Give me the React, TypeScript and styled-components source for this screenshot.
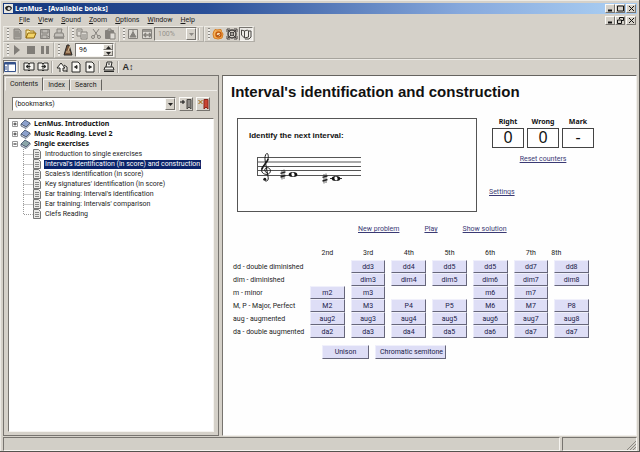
import React from "react";
import styled, { createGlobalStyle, css } from "styled-components";

const GlobalStyle = createGlobalStyle`
  * { box-sizing: border-box; }
  body { margin: 0; background: #d5d1c9; }
  body, button, input, select { font-family: Roboto, "Noto Sans", sans-serif; font-size: 7px; line-height: 10px; color: #1c1c1c; }
  button, input, select { margin: 0; padding: 0; border-radius: 0; }
`;

const boldFace = css`
  font-family: "Noto Sans", "Open Sans", sans-serif;
  font-weight: 700;
`;
const raised = css`
  border: 1px solid;
  border-color: #fbfaf7 #77746f #77746f #fbfaf7;
`;
const sunken = css`
  border: 1px solid;
  border-color: #77746f #f6f4f0 #f6f4f0 #77746f;
`;

const Window = styled.div`
  display: flex;
  flex-direction: column;
  min-height: 100vh;
  padding: 3px 2px 0 3px;
  background: #d5d1c9;
  border-right: 1px solid #55534f;
  border-bottom: 1px solid #55534f;
  box-shadow: inset 1px 1px #eceae5;
`;
const TitleBar = styled.header`
  display: flex;
  align-items: center;
  gap: 2px;
  height: 11px;
  padding: 0 1px;
  background: linear-gradient(90deg, #16387c, #2a4f98 32%, #86a8dc 72%, #a6caf0 95%);
`;
const Title = styled.h1`
  flex: 1;
  margin: 0;
  font-size: 7px;
  line-height: 10px;
  color: #fff;
  ${boldFace}
`;
const WindowButtons = styled.div`
  display: flex;
  button:last-child { margin-left: 1px; }
`;
const CaptionButton = styled.button`
  display: grid;
  place-items: center;
  width: 10px;
  height: 9px;
  background: #d5d1c9;
  ${raised}
`;
const MenuBar = styled.nav`
  display: flex;
  align-items: center;
  height: 12px;
  padding: 0 1px 0 12px;
`;
const MenuList = styled.div`
  display: flex;
  flex: 1;
`;
const MenuItem = styled.button`
  padding: 0 4px;
  border: 0;
  background: none;
  &::first-letter { text-decoration: underline; }
`;
const BarRow = styled.div`
  display: flex;
  height: 16px;
`;
const ToolBar = styled.div`
  display: flex;
  align-items: center;
  height: 16px;
  padding: 0 1px;
  border: 1px solid;
  border-color: #eceae4 #b1aea7 #b1aea7 #eceae4;
`;
const Grip = styled.span`
  width: 2px;
  height: 12px;
  margin: 0 1px 0 2px;
  background: repeating-linear-gradient(#8b8984 0 1px, #efede9 1px 3px);
`;
const Separator = styled.span`
  width: 2px;
  height: 12px;
  margin: 0 2px 0 1px;
  border-left: 1px solid #aaa7a1;
  border-right: 1px solid #f1efeb;
`;
const ToolButton = styled.button<{ $pressed?: boolean; $dim?: boolean }>`
  display: grid;
  place-items: center;
  width: 14px;
  height: 14px;
  background: ${(p) => (p.$pressed ? "#ebe9e5" : "none")};
  color: ${(p) => (p.$dim ? "#85827d" : "#2a2a28")};
  border: 0;
  ${(p) => p.$pressed && sunken}
`;
const Field = styled.div<{ $grow?: boolean; $width?: number; $off?: boolean }>`
  display: flex;
  flex: ${(p) => (p.$grow ? "1" : "none")};
  width: ${(p) => (p.$width ? p.$width + "px" : "auto")};
  height: 14px;
  background: ${(p) => (p.$off ? "#d5d1c9" : "#fff")};
  position: relative;
  ${sunken}
`;
const Select = styled.select`
  flex: 1;
  min-width: 0;
  padding: 0 2px;
  border: 0;
  appearance: none;
  background: transparent;
  line-height: 12px;
  &:disabled { color: #96938d; opacity: 1; padding-left: 3px; }
`;
const DropArrow = styled.span`
  display: grid;
  place-items: center;
  position: absolute;
  right: 0;
  top: 0;
  width: 10px;
  height: 12px;
  background: #d5d1c9;
  pointer-events: none;
  ${raised}
`;
const TempoInput = styled.input`
  flex: 1;
  min-width: 0;
  padding: 0 3px;
  border: 0;
  background: none;
`;
const SpinColumn = styled.div`
  display: grid;
  width: 10px;
  grid-template-rows: 6px 6px;
`;
const SpinButton = styled.button`
  display: grid;
  place-items: center;
  background: #d5d1c9;
  ${raised}
`;
const NavBar = styled.div`
  display: flex;
  align-items: center;
  height: 17px;
  border-top: 1px solid #a7a49d;
  box-shadow: inset 0 1px #ebe9e4;
`;
const FontSizeLabel = styled.b`
  font: 700 9px/12px "Liberation Sans", "DejaVu Sans", sans-serif;
`;
const Main = styled.main`
  display: flex;
  flex: 1;
  gap: 3px;
`;
const SidePane = styled.aside`
  display: flex;
  flex-direction: column;
  flex: 0 0 34%;
  min-width: 216px;
  padding: 1px 4px 3px;
  background: #d5d1c9;
  border: 1px solid #77746f;
`;
const TabRow = styled.div`
  display: flex;
  align-items: flex-end;
  height: 14px;
  margin: 0 -3px;
  box-shadow: inset 0 -1px #eeece8;
`;
const Tab = styled.button<{ $active?: boolean }>`
  height: ${(p) => (p.$active ? "14px" : "12px")};
  padding: 0 4px;
  background: #d5d1c9;
  border: 1px solid;
  border-color: #f1efeb #65635f transparent #f1efeb;
  border-bottom-color: ${(p) => (p.$active ? "#d5d1c9" : "#eeece8")};
`;
const BookmarkRow = styled.div`
  display: flex;
  gap: 3px;
  padding: 6px 4px 7px 4px;
`;
const BookmarkButton = styled.button`
  display: grid;
  place-items: center;
  width: 14px;
  height: 14px;
  background: #d5d1c9;
  ${raised}
`;
const Tree = styled.ul`
  flex: 1;
  margin: 0;
  padding: 0 3px;
  list-style: none;
  background: #fff;
  ${sunken}
`;
const SubTree = styled.ul`
  margin: 0 0 0 10px;
  padding: 0;
  list-style: none;
`;
const BookRow = styled.button`
  display: flex;
  align-items: center;
  gap: 3px;
  height: 10px;
  border: 0;
  background: none;
  color: #111;
  ${boldFace}
`;
const PageRow = styled.button`
  display: flex;
  align-items: center;
  height: 10px;
  border: 0;
  background: none;
  white-space: nowrap;
`;
const PageLabel = styled.span<{ $selected?: boolean }>`
  margin-left: 2px;
  padding: 0 1px;
  line-height: 9px;
  ${(p) => p.$selected && "background:#0a246a;color:#fff;"}
`;
const Page = styled.article`
  flex: 1;
  padding: 6px 8px;
  background: #fefefe;
  border: 1px solid;
  border-color: #65635f #f1efeb #f1efeb #77746f;
`;
const PageHeading = styled.h2`
  margin: 0;
  font: 700 15px/20px "Liberation Sans", Arial, sans-serif;
  color: #111;
`;
const ExerciseRow = styled.div`
  display: flex;
  gap: 12px;
  margin: 16px 0 0 6px;
`;
const ScoreBox = styled.section`
  width: 240px;
  height: 94px;
  padding: 11px 11px;
  border: 1px solid #555;
`;
const Prompt = styled.h3`
  margin: 0;
  font: 700 8px/12px "Liberation Sans", Arial, sans-serif;
  color: #111;
`;
const Score = styled.svg`
  display: block;
  margin: 8px 0 0 6px;
`;
const ScoreSide = styled.div`
  display: flex;
  flex-direction: column;
  align-items: flex-start;
`;
const Counters = styled.div`
  display: flex;
  gap: 3px;
  margin: -1px 0 6px 3px;
`;
const Counter = styled.div`
  display: flex;
  flex-direction: column;
  align-items: center;
  width: 32px;
  color: #111;
  ${boldFace}
`;
const CounterValue = styled.output`
  width: 100%;
  height: 20px;
  margin-top: 1px;
  border: 1px solid #444;
  background: #fff;
  font: 400 16px/17px "Noto Sans", sans-serif;
  text-align: center;
`;
const PageLink = styled.a`
  color: #3a3a74;
  text-decoration: underline;
`;
const ResetLine = styled.div`
  width: 108px;
  text-align: center;
  margin-bottom: 23px;
`;
const ActionRow = styled.div`
  display: flex;
  gap: 25px;
  margin: 12px 0 0 127px;
`;
const Intervals = styled.table`
  width: 361px;
  margin-top: 14px;
  border-collapse: collapse;
  table-layout: fixed;
  th { font-weight: 400; padding: 0; }
  td { padding: 0 3px; height: 12px; }
  tbody th { text-align: left; padding-left: 2px; white-space: nowrap; }
  thead th { height: 12px; vertical-align: top; }
  thead th:last-child { text-align: left; }
`;
const NameColumn = styled.col`
  width: 76px;
`;
const AnswerButton = styled.button<{ $inline?: boolean }>`
  display: block;
  width: ${(p) => (p.$inline ? "auto" : "100%")};
  min-width: 34px;
  height: ${(p) => (p.$inline ? "14px" : "13px")};
  padding: 0 ${(p) => (p.$inline ? "4px" : "0")};
  background: #dedef6;
  color: #202048;
  line-height: 10px;
  white-space: nowrap;
  border: 1px solid;
  border-color: #f0f0fb #66667a #66667a #eeeefb;
`;
const ExtraRow = styled.div`
  display: grid;
  grid-template-columns: 47px 71px;
  gap: 6px;
  margin: 7px 0 0 91px;
`;
const StatusBar = styled.footer`
  display: grid;
  grid-template-columns: 1fr 75px;
  gap: 2px;
  height: 14px;
  margin-top: 1px;
`;
const StatusCell = styled.div`
  display: flex;
  justify-content: flex-end;
  align-items: flex-end;
  background: #d2cfc7;
  ${sunken}
`;

const glyphs: Record<string, React.ReactNode> = {
  new: <g><path d="M3 1h5l2 2v8H3z" fill="#aaa7a1" stroke="currentColor" /><path d="M4 4h4M4 6h5M4 8h5" stroke="currentColor" /></g>,
  open: <g><path d="M1 10V2h3l1 1h4v2" fill="#f7e6a0" stroke="#a37b14" /><path d="M1 10l2-5h8l-2 5z" fill="#f3d468" stroke="#8d6508" /></g>,
  save: <g><path d="M1.500 1.500h9v9h-9z" fill="#bdbab4" stroke="currentColor" /><path d="M3 2v3h6V2M3 10V7h5v3M9 8l2 2" fill="none" stroke="currentColor" /></g>,
  print: <g><path d="M4 5V1h5l-1 4M2 5h8l1 4H1z" fill="#c5c2bc" stroke="currentColor" /><path d="M1 10h10" stroke="currentColor" strokeWidth="1.500" /></g>,
  copy: <g fill="#dcd9d3" stroke="currentColor"><path d="M1 1h5v7H1z" /><path d="M5 4h6v7H5z" /><path d="M6 7h4M6 9h4M2 3h3" /></g>,
  cut: <g fill="none" stroke="currentColor"><path d="M3 1l5 7M9 1L4 8" /><circle cx="3" cy="9" r="1.500" /><circle cx="9" cy="9" r="1.500" /></g>,
  paste: <g stroke="currentColor"><path d="M1.500 2.500h8v8h-8z" fill="#85827d" /><path d="M4 1h3v2H4z" fill="#ccc" /><path d="M6 5h5v6H6z" fill="#e0ddd7" /></g>,
  fit: <g fill="#dcd9d3" stroke="currentColor"><path d="M1.500 1.500h9v9h-9z" /><path d="M3 9l3-5 3 5zM6 2v3" fill="currentColor" /></g>,
  width: <g fill="#dcd9d3" stroke="currentColor"><path d="M1.500 1.500h9v9h-9z" /><path d="M2 3h8M3 7h7M5 5L3 7l2 2M8 5l2 2-2 2" fill="none" strokeWidth="1.500" /></g>,
  swirl: <g fill="none" stroke="#d77b1c"><path d="M2 3l1-1.500L5 2l4-.5.500 2L11 6l-1 4-4 1-4-1-1-4z" fill="#f4b35c" /><circle cx="6.500" cy="6.500" r="2.500" fill="#fbe0b4" stroke="#c45a0c" strokeWidth="1.500" /><path d="M5 7c1 1.500 3 0 2-1" stroke="#873806" /></g>,
  ring: <g fill="none" stroke="#44413e"><path d="M1 4V1h3M8 1h3v3M1 8v3h3M8 11h3V8" /><circle cx="6" cy="6" r="4" strokeWidth="1.500" /><circle cx="6" cy="6" r="1.500" /><path d="M2 2l3 3M10 2L7 5M2 10l3-3M10 10L7 7" /></g>,
  books: <g fill="#eeece8" stroke="#494743"><path d="M1.500 2l3 1v7l-3-3z" /><path d="M4.500 3l3-1 1 1v6l-4 1z" /><path d="M8.500 3H11v6l-2 2H5" fill="none" /></g>,
  play: <path d="M3 1l6 5-6 5z" fill="#807d78" />,
  stop: <path d="M2 2h8v8H2z" fill="#807d78" />,
  pause: <path d="M2 2h3v8H2zM7 2h3v8H7z" fill="#807d78" />,
  metro: <g stroke="currentColor"><path d="M5 1h2l3 10H2z" fill="#77543a" /><path d="M4 8h4M6 7l2-5" stroke="#e1c79f" /></g>,
  panes: <g stroke="#34518a"><path d="M.5 1.500h11v9H.5z" fill="#fff" /><path d="M1 2.500h10" strokeWidth="2" /><path d="M4 3v7M1 6h2M1 8h2" /></g>,
  back: <g stroke="currentColor" fill="#f7f5f0"><path d="M1 2h4l1 1 1-1h4v7H7l-1 1-1-1H1zM6 3v6" /><path d="M7.500 5.500h-4M5 4L3 5.500 5 7" fill="currentColor" /></g>,
  forward: <g stroke="currentColor" fill="#f7f5f0"><path d="M1 2h4l1 1 1-1h4v7H7l-1 1-1-1H1zM6 3v6" /><path d="M4.500 5.500h4M7 4l2 1.500L7 7" fill="currentColor" /></g>,
  up: <path d="M4 11V7H1l4-5 4 5H7v3h4M8 4l3 2v5" fill="#faf8f4" stroke="currentColor" />,
  prev: <g fill="#faf8f4" stroke="currentColor"><path d="M2 1h6l2 2v8H2z" /><path d="M7 4.500L4.500 6 7 7.500z" fill="currentColor" /></g>,
  next: <g fill="#faf8f4" stroke="currentColor"><path d="M2 1h6l2 2v8H2z" /><path d="M5 4.500L7.500 6 5 7.500z" fill="currentColor" /></g>,
  printer: <g fill="#f0eee9" stroke="currentColor"><path d="M3 6l1-5h5L8 6M2 6h8l1 3H1z" /><path d="M1 10.500h10M5 3h2" /></g>,
};

const Icon = ({ name }: { name: string }) => (
  <svg width="12" height="12" viewBox="0 0 12 12" aria-hidden="true">{glyphs[name]}</svg>
);
const Tool = ({ name, label, dim, pressed }: { name: string; label: string; dim?: boolean; pressed?: boolean }) => (
  <ToolButton aria-label={label} $dim={dim} $pressed={pressed}><Icon name={name} /></ToolButton>
);
const Arrow = ({ up, dim }: { up?: boolean; dim?: boolean }) => (
  <svg width="5" height="3" viewBox="0 0 5 3" aria-hidden="true">
    <path d={up ? "M0 3h5L2.500 0z" : "M0 0h5L2.500 3z"} fill={dim ? "#8d8a85" : "#222"} />
  </svg>
);
const captionPaths = {
  Minimize: "M1 5.500h4",
  Maximize: "M.5 1h6M.5 1v5h6V1",
  Restore: "M2.500 2V.5h4v3H5M.5 3h4v3.500h-4z",
  Close: "M1 1l5 5M6 1L1 6",
};
const Caption = ({ kind }: { kind: keyof typeof captionPaths }) => (
  <CaptionButton aria-label={kind}>
    <svg width="7" height="7" viewBox="0 0 7 7" aria-hidden="true">
      <path d={captionPaths[kind]} fill="none" stroke="#111" strokeWidth={kind === "Minimize" ? 2 : 1} />
    </svg>
  </CaptionButton>
);
const BookIcon = ({ open }: { open?: boolean }) => (
  <svg width="19" height="10" viewBox="0 0 19 10" aria-hidden="true">
    <path d="M.5 2.500h5v5h-5zM1.500 5h3" fill="#fff" stroke="#999" />
    <path d={open ? "M1.500 5h3" : "M1.500 5h3M3 3.500v3"} stroke="#444" />
    <path d="M9 5l4-4 5 3-4 4z" fill={open ? "#8ba6a8" : "#8ba0cc"} stroke="#3d4e68" strokeWidth=".8" />
    <path d="M9 5v2l5 2.500 4-4V4l-4 4z" fill="#e7eaf0" stroke="#45536b" strokeWidth=".8" />
  </svg>
);
const PageIcon = ({ last }: { last?: boolean }) => (
  <svg width="20" height="10" viewBox="0 0 20 10" aria-hidden="true">
    <path d={last ? "M1.500 0v5.500h9" : "M1.500 0v10M1.500 5.500h9"} fill="none" stroke="#999" strokeDasharray="1 1" />
    <path d="M11.500 .5h5l2 2v7h-7z" fill="#e9e9e7" stroke="#777" />
    <path d="M13 3.500h4M13 5.500h4M13 7.500h4" stroke="#888" />
  </svg>
);
const BookmarkIcon = ({ remove }: { remove?: boolean }) => (
  <svg width="12" height="12" viewBox="0 0 12 12" aria-hidden="true">
    <path d="M7 1.500h4v9.500L9 9l-2 2z" fill={remove ? "#ca4432" : "#8c8985"} stroke={remove ? "#8b241a" : "#494743"} />
    <path d={remove ? "M1.500 2l4 4M5.500 2l-4 4" : "M0 4h5M3 2v4"} stroke={remove ? "#a36200" : "#111"} />
  </svg>
);

const menus = ["File", "View", "Sound", "Zoom", "Options", "Window", "Help"];
const pages = [
  "Introduction to single exercises",
  "Interval's identification (in score) and construction",
  "Scales's identification (in score)",
  "Key signatures' identification (in score)",
  "Ear training: Interval's identification",
  "Ear training: Intervals' comparison",
  "Clefs Reading",
];
const ordinals = ["2nd", "3rd", "4th", "5th", "6th", "7th", "8th"];
const rows: [string, string[]][] = [
  ["dd - double diminished", ["", "dd3", "dd4", "dd5", "dd5", "dd7", "dd8"]],
  ["dim - diminished", ["", "dim3", "dim4", "dim5", "dim6", "dim7", "dim8"]],
  ["m - minor", ["m2", "m3", "", "", "m6", "m7", ""]],
  ["M, P - Major, Perfect", ["M2", "M3", "P4", "P5", "M6", "M7", "P8"]],
  ["aug - augmented", ["aug2", "aug3", "aug4", "aug5", "aug6", "aug7", "aug8"]],
  ["da - double augmented", ["da2", "da3", "da4", "da5", "da6", "da7", "da7"]],
];

const Sharp = ({ x, y }: { x: number; y: number }) => (
  <g transform={`translate(${x} ${y})`} stroke="#222">
    <path d="M-1 -4.500v9.500M1 -5v9.500" strokeWidth=".7" />
    <path d="M-2.500 -1.200l5-1.500M-2.500 2.500l5-1.500" strokeWidth="1.400" />
  </g>
);
const WholeNote = ({ x, y }: { x: number; y: number }) => (
  <g transform={`translate(${x} ${y})`}>
    <ellipse rx="4.300" ry="2.500" fill="#111" />
    <ellipse rx="1.500" ry="2" fill="#fff" transform="rotate(-25)" />
  </g>
);
const Staff = () => (
  <Score width="108" height="34" viewBox="0 0 108 34" role="img" aria-label="Two notes on a treble staff">
    <path d="M2 7.500h104M2 12h104M2 16.500h104M2 20.500h104M2 25.500h104M2.500 7v19" stroke="#555" fill="none" />
    <g fill="none" stroke="#1a1a1a" strokeLinecap="round">
      <path d="M11.500 22.500c-2.500-.6-2.500-4.600.8-4.800 3.500 0 4.300 4.700 1.200 6.200-3.500 1.500-7.300-.8-6.900-4.300.4-4 6.700-7.300 6.700-12.800 0-2.500-.8-3.700-1.600-3.300-1.700 1-2 4.500-1.500 7.500l3 16.500c.5 2.500-1 4-2.700 3.500" strokeWidth="1" />
      <path d="M7 19c.8-3.500 4.700-6 6-9.500" strokeWidth="1.600" />
    </g>
    <circle cx="9.800" cy="29.300" r="1.500" fill="#1a1a1a" />
    <Sharp x={28} y={24.500} />
    <WholeNote x={38} y={24.500} />
    <Sharp x={70} y={28.500} />
    <path d="M75 28.500h12" stroke="#333" />
    <WholeNote x={81} y={28.500} />
  </Score>
);

export default function App() {
  return (
    <Window>
      <GlobalStyle />
      <TitleBar>
        <svg width="9" height="9" viewBox="0 0 9 9" aria-hidden="true">
          <path d="M0 0h9v9H0z" fill="#e8e8e4" />
          <path d="M1 4c1-3 6-3 7 0-1 4-6 4-7 0z" fill="#222" />
          <circle cx="5" cy="4.500" r="1.500" fill="#ddd" />
        </svg>
        <Title>LenMus - [Available books]</Title>
        <WindowButtons><Caption kind="Minimize" /><Caption kind="Maximize" /><Caption kind="Close" /></WindowButtons>
      </TitleBar>
      <MenuBar>
        <MenuList>{menus.map((m) => <MenuItem key={m}>{m}</MenuItem>)}</MenuList>
        <WindowButtons><Caption kind="Minimize" /><Caption kind="Restore" /><Caption kind="Close" /></WindowButtons>
      </MenuBar>
      <BarRow>
        <ToolBar>
          <Grip />
          <Tool name="new" label="New" dim /><Tool name="open" label="Open" /><Tool name="save" label="Save" dim /><Tool name="print" label="Print" dim />
        </ToolBar>
        <ToolBar>
          <Grip />
          <Tool name="copy" label="Copy" dim /><Tool name="cut" label="Cut" dim /><Tool name="paste" label="Paste" dim />
        </ToolBar>
        <ToolBar>
          <Grip />
          <Tool name="fit" label="Fit page" dim /><Tool name="width" label="Fit width" dim />
          <Field $width={43} $off>
            <Select aria-label="Zoom level" disabled><option>100%</option></Select>
            <DropArrow><Arrow dim /></DropArrow>
          </Field>
          <Separator />
        </ToolBar>
        <ToolBar>
          <Grip />
          <Tool name="swirl" label="Exercises" /><Tool name="ring" label="Help" /><Tool name="books" label="Books" pressed />
        </ToolBar>
      </BarRow>
      <BarRow>
        <ToolBar>
          <Grip />
          <Tool name="play" label="Play score" /><Tool name="stop" label="Stop" /><Tool name="pause" label="Pause" />
        </ToolBar>
        <ToolBar>
          <Grip />
          <Tool name="metro" label="Metronome" />
          <Field $width={39}>
            <TempoInput aria-label="Tempo" defaultValue="96" />
            <SpinColumn>
              <SpinButton aria-label="Faster"><Arrow up /></SpinButton>
              <SpinButton aria-label="Slower"><Arrow /></SpinButton>
            </SpinColumn>
          </Field>
        </ToolBar>
      </BarRow>
      <NavBar>
        <Tool name="panes" label="Contents pane" pressed />
        <Separator />
        <Tool name="back" label="Back" /><Tool name="forward" label="Forward" />
        <Separator />
        <Tool name="up" label="Up" /><Tool name="prev" label="Previous page" /><Tool name="next" label="Next page" />
        <Separator />
        <Tool name="printer" label="Print page" />
        <Separator />
        <ToolButton aria-label="Font size"><FontSizeLabel>A↕</FontSizeLabel></ToolButton>
      </NavBar>
      <Main>
        <SidePane>
          <TabRow role="tablist">
            <Tab role="tab" aria-selected $active>Contents</Tab><Tab role="tab">Index</Tab><Tab role="tab">Search</Tab>
          </TabRow>
          <BookmarkRow>
            <Field $grow>
              <Select aria-label="Bookmarks"><option>(bookmarks)</option></Select>
              <DropArrow><Arrow /></DropArrow>
            </Field>
            <BookmarkButton aria-label="Add bookmark"><BookmarkIcon /></BookmarkButton>
            <BookmarkButton aria-label="Remove bookmark"><BookmarkIcon remove /></BookmarkButton>
          </BookmarkRow>
          <Tree>
            <li><BookRow><BookIcon />LenMus. Introduction</BookRow></li>
            <li><BookRow><BookIcon />Music Reading. Level 2</BookRow></li>
            <li>
              <BookRow><BookIcon open />Single exercises</BookRow>
              <SubTree>
                {pages.map((p, i) => (
                  <li key={p}>
                    <PageRow><PageIcon last={i === pages.length - 1} /><PageLabel $selected={i === 1}>{p}</PageLabel></PageRow>
                  </li>
                ))}
              </SubTree>
            </li>
          </Tree>
        </SidePane>
        <Page>
          <PageHeading>Interval's identification and construction</PageHeading>
          <ExerciseRow>
            <ScoreBox>
              <Prompt>Identify the next interval:</Prompt>
              <Staff />
            </ScoreBox>
            <ScoreSide>
              <Counters>
                {[["Right", "0"], ["Wrong", "0"], ["Mark", "-"]].map(([k, v]) => (
                  <Counter key={k}>{k}<CounterValue aria-label={k}>{v}</CounterValue></Counter>
                ))}
              </Counters>
              <ResetLine><PageLink href="#reset">Reset counters</PageLink></ResetLine>
              <PageLink href="#settings">Settings</PageLink>
            </ScoreSide>
          </ExerciseRow>
          <ActionRow>
            <PageLink href="#new">New problem</PageLink>
            <PageLink href="#play">Play</PageLink>
            <PageLink href="#solution">Show solution</PageLink>
          </ActionRow>
          <Intervals>
            <colgroup><NameColumn />{ordinals.map((o) => <col key={o} />)}</colgroup>
            <thead><tr><td />{ordinals.map((o) => <th key={o} scope="col">{o}</th>)}</tr></thead>
            <tbody>
              {rows.map(([name, cells]) => (
                <tr key={name}>
                  <th scope="row">{name}</th>
                  {cells.map((c, i) => <td key={i}>{c && <AnswerButton>{c}</AnswerButton>}</td>)}
                </tr>
              ))}
            </tbody>
          </Intervals>
          <ExtraRow><AnswerButton $inline>Unison</AnswerButton><AnswerButton $inline>Chromatic semitone</AnswerButton></ExtraRow>
        </Page>
      </Main>
      <StatusBar>
        <StatusCell />
        <StatusCell>
          <svg width="9" height="9" viewBox="0 0 9 9" aria-hidden="true"><path d="M0 9l9-9M3 9l6-6M6 9l3-3" stroke="#8b8882" /></svg>
        </StatusCell>
      </StatusBar>
    </Window>
  );
}
